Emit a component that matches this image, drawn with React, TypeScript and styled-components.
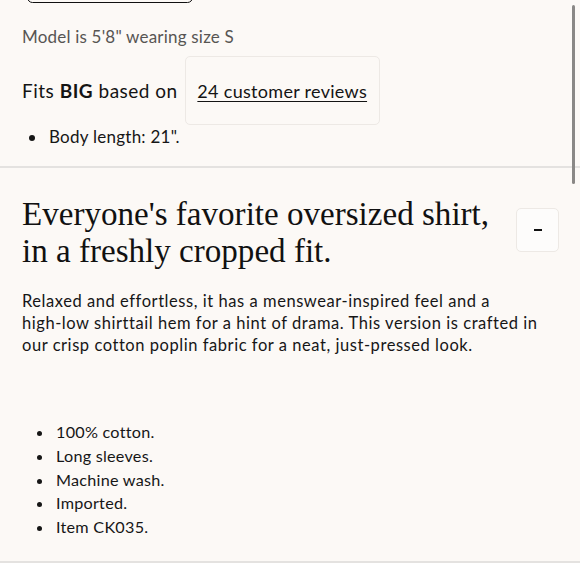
import React from 'react';
import styled, { createGlobalStyle } from 'styled-components';

const GlobalStyle = createGlobalStyle`
  html, body {
    margin: 0;
    padding: 0;
    background: #ffffff;
  }
  *, *::before, *::after {
    box-sizing: border-box;
  }
  body {
    font-family: Lato, "Noto Sans", sans-serif;
    color: #1a1a1a;
    overflow: hidden;
  }
`;

const Page = styled.div`
  position: relative;
  width: 580px;
  height: 580px;
  overflow: hidden;
  background: #ffffff;
`;

const Panel = styled.div`
  background: #fcf9f6;
  border-bottom: 2px solid #e4e2e0;
`;

const FitSection = styled.section`
  padding: 0 22px 18px;
  border-bottom: 2px solid #e4e2e0;
`;

// size selector button from the section above, scrolled mostly out of view
const SizeButton = styled.div`
  width: 166px;
  height: 11px;
  margin: -8px 0 0 5px;
  border: 1.5px solid #111;
  border-radius: 7px;
`;

const ModelNote = styled.p`
  margin: 23px 0 0;
  font-size: 17px;
  line-height: 22px;
  color: #575553;
  letter-spacing: 0.2px;
`;

const FitRow = styled.div`
  display: flex;
  align-items: center;
  margin-top: 8px;
  color: #141414;
`;

const FitLabel = styled.span`
  font-size: 19px;
  letter-spacing: 0.5px;
  b {
    font-weight: 700;
  }
`;

const ReviewBox = styled.div`
  display: flex;
  align-items: center;
  justify-content: center;
  width: 195px;
  height: 69px;
  margin-left: 7px;
  border: 1px solid #ede9e5;
  border-radius: 5px;
`;

const ReviewLink = styled.a`
  font-size: 18px;
  color: #141414;
  text-decoration: underline;
  text-underline-offset: 3px;
  text-decoration-thickness: 1px;
  letter-spacing: 0.3px;
`;

const BulletList = styled.ul<{ indent: number; spacing: number; size: number }>`
  margin: 0;
  padding-left: ${p => p.indent}px;
  font-size: ${p => p.size}px;
  color: #161616;
  li {
    line-height: ${p => p.spacing}px;
    padding-left: 2px;
    letter-spacing: 0.25px;
  }
`;

const BodyNote = styled.div`
  margin-top: 1px;
`;

const DescSection = styled.section`
  padding: 28px 22px 22px;
`;

const HeadRow = styled.div`
  display: flex;
  align-items: flex-start;
  justify-content: space-between;
`;

const Heading = styled.h2`
  margin: 0;
  font-family: "Liberation Serif", "Times New Roman", serif;
  font-weight: 400;
  font-size: 33.1px;
  line-height: 37px;
  color: #111;
`;

const ToggleButton = styled.button`
  flex: none;
  width: 43px;
  height: 44px;
  margin-top: 12px;
  margin-right: -1px;
  border: 1px solid #ede9e5;
  border-radius: 5px;
  background: #fdfcfb;
  display: flex;
  align-items: center;
  justify-content: center;
  padding: 0;
  &::before {
    content: '';
    width: 8px;
    height: 2px;
    background: #111;
  }
`;

const Paragraph = styled.p`
  margin: 20px 0 0;
  font-size: 16.5px;
  line-height: 22px;
  color: #161616;
  letter-spacing: 0.55px;
`;

const NoBreak = styled.span`
  white-space: nowrap;
`;

const Details = styled.div`
  margin-top: 64px;
`;

const Scrollbar = styled.div`
  position: absolute;
  top: 5px;
  right: 5px;
  width: 3.5px;
  height: 179px;
  border-radius: 2px;
  background: #8a8886;
`;

export default function App() {
  return (
    <Page>
      <GlobalStyle />
      <Panel>
        <FitSection>
          <SizeButton />
          <ModelNote>Model is 5'8" wearing size S</ModelNote>
          <FitRow>
            <FitLabel>
              Fits <b>BIG</b> based on
            </FitLabel>
            <ReviewBox>
              <ReviewLink>24 customer reviews</ReviewLink>
            </ReviewBox>
          </FitRow>
          <BodyNote>
            <BulletList indent={25} spacing={22} size={17}>
              <li>Body length: 21".</li>
            </BulletList>
          </BodyNote>
        </FitSection>
        <DescSection>
          <HeadRow>
            <Heading>
              Everyone's favorite oversized shirt,
              <br />
              in a freshly cropped fit.
            </Heading>
            <ToggleButton aria-label="Collapse" />
          </HeadRow>
          <Paragraph>
            Relaxed and effortless, it has a menswear-inspired feel and a <NoBreak>high-low</NoBreak> shirttail
            hem for a hint of drama. This version is crafted in our crisp cotton poplin fabric for a neat,
            just-pressed look.
          </Paragraph>
          <Details>
            <BulletList indent={32} spacing={23.75} size={16.2}>
              <li>100% cotton.</li>
              <li>Long sleeves.</li>
              <li>Machine wash.</li>
              <li>Imported.</li>
              <li>Item CK035.</li>
            </BulletList>
          </Details>
        </DescSection>
      </Panel>
      <Scrollbar />
    </Page>
  );
}
